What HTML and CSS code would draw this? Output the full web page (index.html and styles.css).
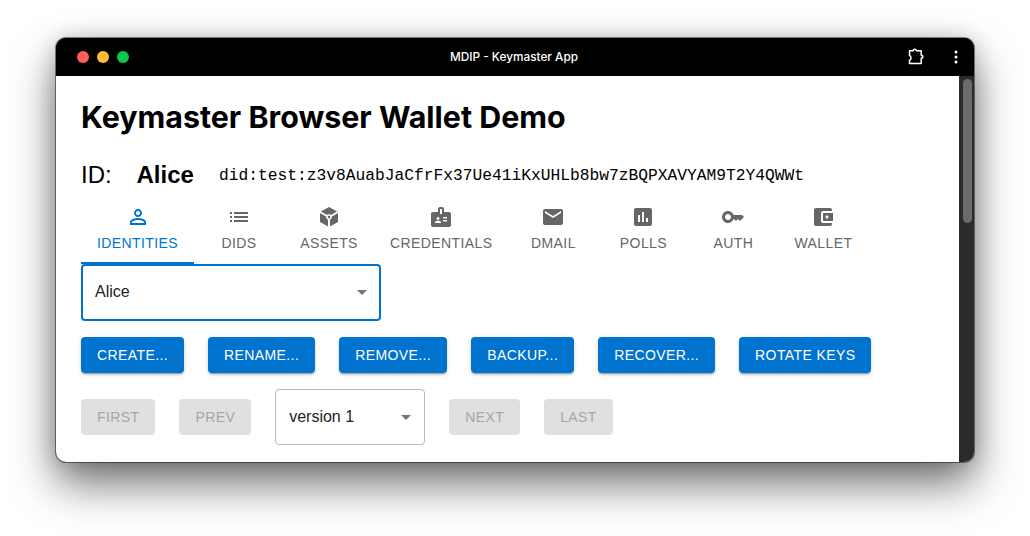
FILE: index.html
```html
<!DOCTYPE html>
<html lang="en">
<head>
<meta charset="utf-8">
<title>MDIP - Keymaster App</title>
<link rel="stylesheet" href="styles.css">
</head>
<body>
<div class="window">
  <header class="titlebar">
    <div class="lights"><span class="light red"></span><span class="light amber"></span><span class="light green"></span></div>
    <div class="title">MDIP - Keymaster App</div>
    <div class="actions">
      <svg class="puzzle" viewBox="0 0 18 18" width="18" height="18"><path d="M2.500 2.800H6.200C6.200 .6 9.300 .6 9.300 2.800H14.200V7.200C16.400 7.200 16.400 10.300 14.200 10.300V15.600H2.500V12.200C4.500 11.900 4.500 7.900 2.500 7.600Z" fill="none" stroke="#fff" stroke-width="1.500" stroke-linejoin="round"/></svg>
      <svg class="dots" viewBox="0 0 4 16" width="4" height="16"><circle cx="2" cy="3" r="1.500" fill="#fff"/><circle cx="2" cy="8" r="1.500" fill="#fff"/><circle cx="2" cy="13" r="1.500" fill="#fff"/></svg>
    </div>
  </header>
  <div class="body">
    <main class="content">
      <h1 class="heading">Keymaster Browser Wallet Demo</h1>
      <div class="idrow">
        <span class="idlabel">ID:</span>
        <span class="idname">Alice</span>
        <span class="did">did:test:z3v8AuabJaCfrFx37Ue41iKxUHLb8bw7zBQPXAVYAM9T2Y4QWWt</span>
      </div>
      <nav class="tabs">
        <div class="tab active"><svg viewBox="0 0 24 24"><path d="M12 5.900c1.160 0 2.100.94 2.100 2.100s-.94 2.100-2.100 2.100S9.900 9.160 9.900 8s.94-2.100 2.100-2.100m0 9c2.970 0 6.100 1.460 6.100 2.100v1.100H5.900V17c0-.64 3.130-2.100 6.100-2.100M12 4C9.790 4 8 5.790 8 8s1.790 4 4 4 4-1.790 4-4-1.790-4-4-4zm0 9c-2.670 0-8 1.340-8 4v3h16v-3c0-2.660-5.330-4-8-4z"/></svg><span>Identities</span></div>
        <div class="tab"><svg viewBox="0 0 24 24"><path d="M3 13h2v-2H3v2zm0 4h2v-2H3v2zm0-8h2V7H3v2zm4 4h14v-2H7v2zm0 4h14v-2H7v2zM7 7v2h14V7H7z"/></svg><span>DIDs</span></div>
        <div class="tab"><svg viewBox="0 0 24 24"><path d="M12 2 21 7v10l-9 5-9-5V7z"/><path class="cut" d="M3 7 10 11M21 7 14 11M12 14.500V22"/><circle class="ring" cx="12" cy="12" r="2"/></svg><span>Assets</span></div>
        <div class="tab"><svg viewBox="0 0 24 24"><path d="M20 7h-5V4c0-1.100-.9-2-2-2h-2c-1.100 0-2 .9-2 2v3H4c-1.100 0-2 .9-2 2v11c0 1.100.9 2 2 2h16c1.100 0 2-.9 2-2V9c0-1.100-.9-2-2-2zM9 12c.83 0 1.500.67 1.500 1.500S9.830 15 9 15s-1.500-.67-1.500-1.500S8.170 12 9 12zm3 6H6v-.75c0-1 2-1.500 3-1.500s3 .5 3 1.500V18zm1-9h-2V4h2v5zm5 7.500h-4V15h4v1.500zm0-3h-4V12h4v1.500z"/></svg><span>Credentials</span></div>
        <div class="tab"><svg viewBox="0 0 24 24"><path d="M20 4H4c-1.100 0-1.990.9-1.990 2L2 18c0 1.100.9 2 2 2h16c1.100 0 2-.9 2-2V6c0-1.100-.9-2-2-2zm0 4-8 5-8-5V6l8 5 8-5v2z"/></svg><span>DMail</span></div>
        <div class="tab"><svg viewBox="0 0 24 24"><path d="M19 3H5c-1.100 0-2 .9-2 2v14c0 1.100.9 2 2 2h14c1.100 0 2-.9 2-2V5c0-1.100-.9-2-2-2zM9 17H7v-7h2v7zm4 0h-2V7h2v10zm4 0h-2v-4h2v4z"/></svg><span>Polls</span></div>
        <div class="tab"><svg viewBox="0 0 24 24"><path d="M21 10h-8.350C11.830 7.670 9.610 6 7 6c-3.310 0-6 2.690-6 6s2.690 6 6 6c2.610 0 4.830-1.670 5.650-4H13l2 2 2-2 2 2 4-4.040L21 10zM7 15c-1.650 0-3-1.350-3-3s1.350-3 3-3 3 1.350 3 3-1.350 3-3 3z"/></svg><span>Auth</span></div>
        <div class="tab"><svg viewBox="0 0 24 24"><path d="M21 18v1c0 1.100-.9 2-2 2H5c-1.110 0-2-.9-2-2V5c0-1.100.89-2 2-2h14c1.100 0 2 .9 2 2v1h-9c-1.110 0-2 .9-2 2v8c0 1.100.89 2 2 2h9zm-9-2h10V8H12v8zm4-2.500c-.83 0-1.500-.67-1.500-1.500s.67-1.500 1.500-1.500 1.500.67 1.500 1.500-.67 1.500-1.500 1.500z"/></svg><span>Wallet</span></div>
      </nav>
      <div class="select select-focus"><span>Alice</span><i class="caret"></i></div>
      <div class="btnrow">
        <button class="btn">Create...</button>
        <button class="btn">Rename...</button>
        <button class="btn">Remove...</button>
        <button class="btn">Backup...</button>
        <button class="btn">Recover...</button>
        <button class="btn">Rotate keys</button>
      </div>
      <div class="btnrow versions">
        <button class="btn off">First</button>
        <button class="btn off">Prev</button>
        <div class="select select-version"><span>version 1</span><i class="caret"></i></div>
        <button class="btn off">Next</button>
        <button class="btn off">Last</button>
      </div>
    </main>
    <div class="scrollbar"><div class="thumb"></div></div>
  </div>
</div>
</body>
</html>
```
FILE: styles.css
```css
* { box-sizing: border-box; }
html, body { margin: 0; height: 536px; overflow: hidden; background: #fff; }
body { padding: 38px 56px 74px; font-family: "Liberation Sans", Arial, sans-serif; }

.window {
  width: 918px; height: 424px; display: flex; flex-direction: column;
  border-radius: 10px; overflow: hidden; background: #000;
  box-shadow: 0 0 0 1px rgba(0,0,0,.45), 0 22px 44px rgba(0,0,0,.55), 0 0 22px rgba(0,0,0,.18);
}
.titlebar { height: 38px; flex: none; display: grid; grid-template-columns: 1fr auto 1fr; align-items: center; background: #000; color: #fff; }
.lights { display: flex; gap: 8px; padding-left: 21px; }
.light { width: 12px; height: 12px; border-radius: 50%; }
.red { background: #ff5f57; }
.amber { background: #febc2e; }
.green { background: #0cc84a; }
.title { font: 500 11.800px "Inter", sans-serif; margin-right: 2px; }
.actions { display: flex; align-items: center; justify-content: flex-end; gap: 29px; padding-right: 16px; }

.body { flex: 1; min-height: 0; display: flex; background: #fff; }
.content { flex: 1; min-width: 0; padding: 25px 25px 0; overflow: hidden; }
.heading { margin: 0; font: 700 30.400px/33px "Inter", sans-serif; color: #000; }
.idrow { display: flex; align-items: baseline; margin-top: 27px; height: 29px; color: #000; }
.idlabel { font: 400 24px "Liberation Sans", Arial, sans-serif; width: 55.500px; }
.idname { font: 700 24px "Liberation Sans", Arial, sans-serif; width: 82.500px; }
.did { align-self: flex-start; font: 400 16.250px/30px "Liberation Mono", monospace; }

.tabs { display: flex; margin-top: 6px; height: 68px; }
.tab { display: flex; flex-direction: column; align-items: center; padding: 9px 16px 0; min-width: 90px; color: #666; font-size: 14px; letter-spacing: .4px; text-transform: uppercase; }
.tab svg { width: 24px; height: 24px; fill: currentColor; margin-bottom: 6px; }
.tab .cut { fill: none; stroke: #fff; stroke-width: 2; }
.tab .ring { fill: #666; stroke: #fff; stroke-width: 1.500; }
.tab.active { color: #0073cf; border-bottom: 2px solid #0073cf; }

.select { display: flex; align-items: center; justify-content: space-between; font-size: 16px; color: #222; background: #fff; border-radius: 4px; }
.select-focus { width: 300px; height: 57px; padding: 0 12px 2px; border: 2px solid #0073cf; }
.select-version { width: 150px; height: 56px; padding: 0 13px; border: 1px solid #b9b9b9; }
.caret { width: 0; height: 0; border: 5px solid transparent; border-top-color: #757575; border-bottom: 0; }
.select-focus .caret { margin-top: 2px; }

.btnrow { display: flex; gap: 24px; margin-top: 16px; align-items: center; }
.versions { margin-top: 16px; }
.btn { height: 36px; padding: 0 16px; border: 0; border-radius: 4px; background: #0073cf; color: #fff; font: 14px "Liberation Sans", Arial, sans-serif; letter-spacing: .4px; text-transform: uppercase; box-shadow: 0 3px 1px -2px rgba(0,0,0,.2), 0 2px 2px rgba(0,0,0,.14), 0 1px 5px rgba(0,0,0,.12); }
.btn.off { background: #e0e0e0; color: #a6a6a6; box-shadow: none; }

.scrollbar { width: 15px; flex: none; background: #2b2b2b; padding: 3px 2px 3px 4px; }
.thumb { width: 9px; height: 144px; border-radius: 5px; background: #6b6b6b; }
```
